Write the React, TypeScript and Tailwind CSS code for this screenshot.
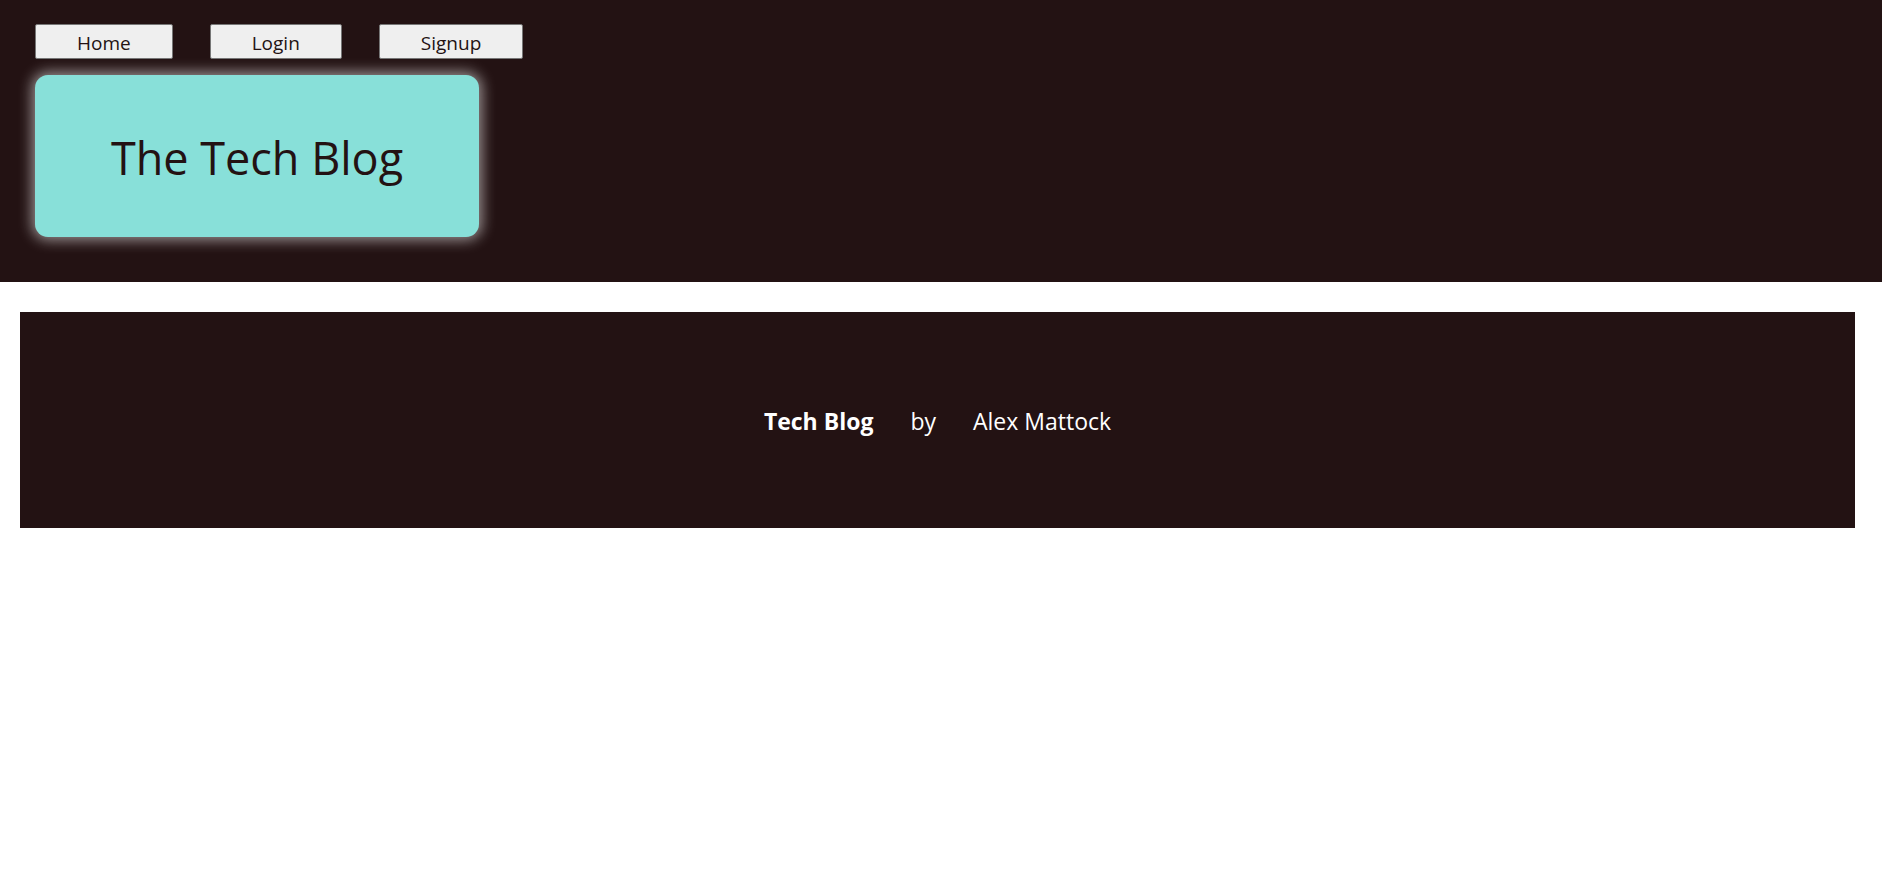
export default function App() {
  const font = { fontFamily: '"Open Sans", "Noto Sans", sans-serif' };
  return (
    <div className="min-h-[871px] bg-white" style={font}>
      <header className="h-[282px] bg-[#231213] pl-[35px] pt-[24px]">
        <nav className="flex gap-[37px]">
          {["Home", "Login", "Signup"].map((t) => (
            <button
              key={t}
              className="h-[35px] px-[41px] pt-[3px] bg-[#efefef] border border-[#767676] rounded-[2px] text-[19px] leading-none text-[#231213]"
            >
              {t}
            </button>
          ))}
        </nav>
        <div className="mt-[16px] w-[444px] h-[162px] rounded-[13px] bg-[#88e0d9] shadow-[0_0_14px_3px_rgba(255,255,255,0.55)] flex items-center justify-center">
          <h1 className="text-[45px] font-normal text-[#231213] leading-none pt-[2px]">The Tech Blog</h1>
        </div>
      </header>
      <main className="pt-[30px] pl-[20px]">
        <section className="w-[1835px] h-[216px] bg-[#231213] flex items-center justify-center gap-[37px] text-white text-[23px] pt-[2px]">
          <span className="font-bold">Tech Blog</span>
          <span>by</span>
          <span>Alex Mattock</span>
        </section>
      </main>
    </div>
  );
}
